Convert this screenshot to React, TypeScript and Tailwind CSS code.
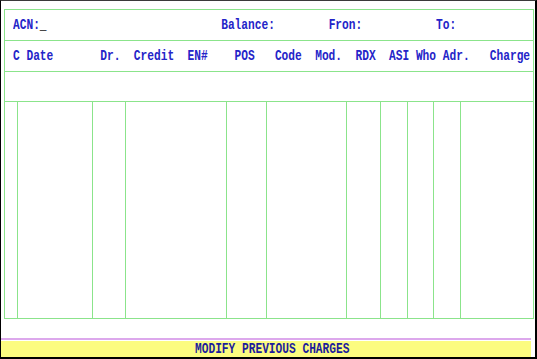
import React from "react";

// DOS text screen: 80 columns across 537px, so one cell is ~6.71px wide
const COL = 537 / 80;

function line(parts: [number, string][], start = 2) {
  let s = "";
  for (const [col, text] of parts) {
    s = s.padEnd(col - start, " ") + text;
  }
  return s;
}

function DosText({ children, className = "" }: { children: React.ReactNode; className?: string }) {
  return (
    <span
      className={`inline-block origin-left scale-x-[0.746] whitespace-pre font-bold text-[15px] leading-none font-['Liberation_Mono',monospace] ${className}`}
    >
      {children}
    </span>
  );
}

const header = line([
  [2, "C"],
  [4, "Date"],
  [15, "Dr."],
  [20, "Credit"],
  [28, "EN#"],
  [35, "POS"],
  [41, "Code"],
  [47, "Mod."],
  [53, "RDX"],
  [58, "ASI"],
  [62, "Who"],
  [66, "Adr."],
  [73, "Charge"],
]);

const topRight = line(
  [
    [33, "Balance:"],
    [49, "Fron:"],
    [65, "To:"],
  ],
  7
);

export default function App() {
  return (
    <div className="w-[537px] h-[359px] overflow-hidden bg-white border-t border-l border-r-2 border-b-2 border-t-[#3a3a3a] border-l-black border-r-black border-b-black">
      <div className="ml-[3px] mt-[8px] w-[530px] h-[310px] border border-[#8be48b] flex flex-col overflow-hidden">
        <div className="h-[31px] border-b border-[#8be48b] flex items-center" style={{ paddingLeft: 2 * COL - 5 }}>
          <DosText className="text-[#2424c8]">
            {"ACN:"}
            <span className="text-black">{"_"}</span>
            {topRight}
          </DosText>
        </div>
        <div className="h-[31px] border-b border-[#8be48b] flex items-center" style={{ paddingLeft: 2 * COL - 5 }}>
          <DosText className="text-[#2424c8]">{header}</DosText>
        </div>
        <div className="h-[30px] border-b border-[#8be48b]" />
        <div className="flex-1 grid grid-cols-[13px_75px_33px_101px_40px_80px_34px_27px_26px_27px_72px]">
          <div className="border-r border-[#8be48b]" />
          <div className="border-r border-[#8be48b]" />
          <div className="border-r border-[#8be48b]" />
          <div className="border-r border-[#8be48b]" />
          <div className="border-r border-[#8be48b]" />
          <div className="border-r border-[#8be48b]" />
          <div className="border-r border-[#8be48b]" />
          <div className="border-r border-[#8be48b]" />
          <div className="border-r border-[#8be48b]" />
          <div className="border-r border-[#8be48b]" />
          <div />
        </div>
      </div>
      <div className="mt-[19px] w-[530px]">
        <div className="h-[2px] bg-[#dca8ec]" />
        <div className="h-[16px] mt-[1px] bg-[#fcfc80] flex items-center" style={{ paddingLeft: 29 * COL - 1 }}>
          <DosText className="text-[#1c1c9c]">MODIFY PREVIOUS CHARGES</DosText>
        </div>
      </div>
    </div>
  );
}
